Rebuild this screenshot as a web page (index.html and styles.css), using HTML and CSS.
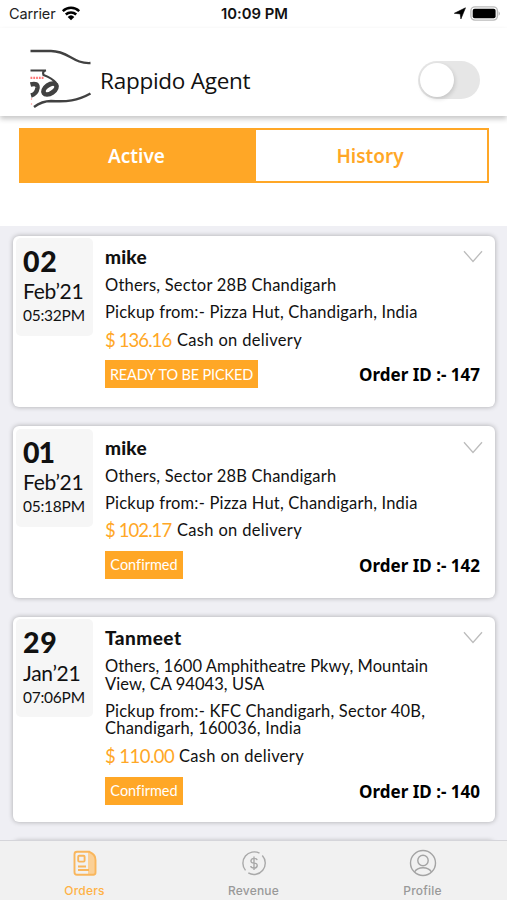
FILE: index.html
```html
<!DOCTYPE html>
<html lang="en">
<head>
<meta charset="utf-8">
<title>Rappido Agent</title>
<link rel="stylesheet" href="styles.css">
</head>
<body>
<div class="app">
  <div class="status">
    <div class="carrier"><span class="carrier-name">Carrier</span>
      <svg width="20" height="15" viewBox="0 0 20 15" fill="none" stroke="#000" stroke-width="2.5"><path d="M1.8 5.1a12 12 0 0 1 16.400 0M4.800 8.500a7.500 7.500 0 0 1 10.400 0"/><path d="M10 14.200L6.700 10.900a4.800 4.800 0 0 1 6.600 0z" fill="#000" stroke="none"/></svg>
    </div>
    <div class="clock">10:09 PM</div>
    <div class="indicators">
      <svg width="12" height="13" viewBox="0 0 12 13"><path d="M11.500.8L6.900 12 6.200 6.900.3 6.300z" fill="#000" stroke="#000" stroke-width=".6"/></svg>
      <svg width="31" height="15" viewBox="0 0 31 15"><rect x=".9" y=".9" width="26.500" height="13.200" rx="4" fill="#fff" stroke="#bbb" stroke-width="1.400"/><rect x="2.700" y="2.700" width="22.900" height="9.600" rx="2" fill="#000"/><path d="M28.700 5.200q2.200 2.300 0 4.600z" fill="#aaa"/></svg>
    </div>
  </div>
  <header class="header">
    <svg class="logo" width="62" height="62" viewBox="0 0 62 62" fill="none" stroke="#414141">
      <path d="M.5 4H21C39 4 43 17 60.500 16" stroke-width="2.300"/>
      <path d="M.5 23.500H16Q12 24 13.500 28Q22 31 26 36" stroke-width="2.200"/>
      <path d="M.5 30.800H14" stroke="#ff7777" stroke-width="2.200" stroke-dasharray="1.800 1"/>
      <path d="M.5 37.500Q8 35.500 7.500 41Q6.500 47 1 48.500" stroke-width="4.500"/>
      <g transform="rotate(-35 20 42)"><ellipse cx="20" cy="42" rx="9.800" ry="6.700" fill="#414141" stroke="none"/><ellipse cx="20" cy="42" rx="5" ry="1.800" fill="#fff" stroke="none"/></g>
      <path d="M4 60Q12 54 21 54C37 55 47 54 60.500 46.500" stroke-width="2.400"/>
      <path d="M1.500 51v9" stroke="#ffb9b9" stroke-width="1.200" stroke-dasharray="2 3"/>
    </svg>
    <h1 class="title">Rappido Agent</h1>
    <div class="switch"><div class="knob"></div></div>
  </header>
  <div class="filters">
    <div class="segments">
      <div class="segment selected">Active</div>
      <div class="segment">History</div>
    </div>
  </div>
  <main class="orders">
    <article class="card">
      <div class="date"><div class="day">02</div><div class="month">Feb’21</div><div class="time">05:32PM</div></div>
      <div class="info">
        <div class="top"><h2 class="name">mike</h2><svg width="20" height="13" viewBox="0 0 20 13" fill="none" stroke="#bcbcbc" stroke-width="1.300"><path d="M1 1.200L10 11.500 19 1.200"/></svg></div>
        <p class="line">Others, Sector 28B Chandigarh</p>
        <p class="line">Pickup from:- Pizza Hut, Chandigarh, India</p>
        <div class="payment"><span class="price">$ 136.16</span><span class="method">Cash on delivery</span></div>
        <div class="bottom"><span class="badge ready">READY TO BE PICKED</span><strong class="order">Order ID :- 147</strong></div>
      </div>
    </article>
    <article class="card">
      <div class="date"><div class="day narrow">01</div><div class="month">Feb’21</div><div class="time">05:18PM</div></div>
      <div class="info">
        <div class="top"><h2 class="name">mike</h2><svg width="20" height="13" viewBox="0 0 20 13" fill="none" stroke="#bcbcbc" stroke-width="1.300"><path d="M1 1.200L10 11.500 19 1.200"/></svg></div>
        <p class="line">Others, Sector 28B Chandigarh</p>
        <p class="line">Pickup from:- Pizza Hut, Chandigarh, India</p>
        <div class="payment"><span class="price">$ 102.17</span><span class="method">Cash on delivery</span></div>
        <div class="bottom"><span class="badge">Confirmed</span><strong class="order">Order ID :- 142</strong></div>
      </div>
    </article>
    <article class="card long">
      <div class="date"><div class="day">29</div><div class="month">Jan’21</div><div class="time">07:06PM</div></div>
      <div class="info">
        <div class="top"><h2 class="name">Tanmeet</h2><svg width="20" height="13" viewBox="0 0 20 13" fill="none" stroke="#bcbcbc" stroke-width="1.300"><path d="M1 1.200L10 11.500 19 1.200"/></svg></div>
        <p class="line address">Others, 1600 Amphitheatre Pkwy, Mountain<br>View, CA 94043, USA</p>
        <p class="line">Pickup from:- KFC Chandigarh, Sector 40B,<br>Chandigarh, 160036, India</p>
        <div class="payment"><span class="price wide">$ 110.00</span><span class="method">Cash on delivery</span></div>
        <div class="bottom"><span class="badge">Confirmed</span><strong class="order">Order ID :- 140</strong></div>
      </div>
    </article>
    <article class="card"></article>
  </main>
  <nav class="tabbar">
    <div class="tab current">
      <svg width="28" height="28" viewBox="0 0 28 28" fill="none" stroke="#f9b65c" stroke-width="1.900"><path d="M17 3h3q5 2 5 7v14q0 2-2 2h-6z" fill="#fbd096" stroke="none"/><path d="M6 2.800h12.500q6 2.700 6 8.200v12.500q0 2.200-2.200 2.200H6q-2.500 0-2.500-2.500V5.300q0-2.500 2.500-2.500z"/><rect x="7.200" y="6.800" width="6.400" height="5.800" rx="1"/><path d="M7 17.500h8M7 21h11"/></svg>
      <span>Orders</span>
    </div>
    <div class="tab">
      <svg width="28" height="28" viewBox="0 0 28 28" fill="none" stroke="#a9a9a9" stroke-width="1.400"><path d="M5.500 21.400A11.300 11.300 0 0 1 19.500 4.200M22.300 6.500A11.300 11.300 0 0 1 8.300 23.900"/><path d="M17.100 11.200Q16.700 9.400 14 9.400T11 11.700 14 14.100 17.200 16.600 14 19 10.800 17M14 7.500v13.400"/></svg>
      <span>Revenue</span>
    </div>
    <div class="tab">
      <svg width="28" height="28" viewBox="0 0 28 28" fill="none" stroke="#a4a4a4" stroke-width="1.400"><circle cx="14" cy="14" r="12.500"/><circle cx="14" cy="11.500" r="5.200"/><path d="M5.500 23Q8 18.800 14 18.800T22.500 23"/></svg>
      <span>Profile</span>
    </div>
  </nav>
</div>
</body>
</html>
```
FILE: styles.css
```css
* { box-sizing: border-box; }
body, h1, h2, p { margin: 0; }
body { background: #fff; color: #111; font-family: Lato, sans-serif; font-variant-ligatures: none; }
.app { display: flex; flex-direction: column; width: 507px; height: 900px; overflow: hidden; }

.status { display: grid; grid-template-columns: 1fr auto 1fr; align-items: center; flex: none; height: 28px; padding: 0 7px 1px 9px; font-family: Inter, sans-serif; }
.carrier { display: flex; align-items: center; gap: 6px; font-size: 14.500px; letter-spacing: -.15px; color: #222; }
.clock { font-size: 14.800px; font-weight: 600; }
.indicators { display: flex; align-items: center; justify-content: flex-end; gap: 4px; margin-right: -1px; }

.header { display: flex; align-items: center; flex: none; height: 88px; padding: 15px 27px 0 30px; background: #fff; box-shadow: 0 3px 5px rgba(0, 0, 0, .22); z-index: 1; }
.logo { margin-top: -3px; }
.title { margin: 2px 0 0 8px; font: 400 22.500px/30px "Open Sans", sans-serif; letter-spacing: -.25px; }
.switch { width: 62px; height: 38px; margin-left: auto; padding: 2px; border-radius: 19px; background: #e6e6e6; }
.knob { width: 34px; height: 34px; border-radius: 50%; background: #fff; box-shadow: 1px 2px 4px rgba(0, 0, 0, .15); }

.filters { flex: none; height: 110px; padding: 12px 18px 0 19px; }
.segments { display: grid; grid-template-columns: 235px 1fr; height: 55px; border: 2px solid #ffa726; }
.segment { display: flex; align-items: center; justify-content: center; padding-right: 3px; color: #ffa726; font: 600 19px "Noto Sans", sans-serif; }
.selected { padding-right: 4px; background: #ffa726; color: #fff; }

.orders { display: flex; flex-direction: column; flex: 1; min-height: 0; gap: 19px; padding: 9.500px 12px 0 13px; background: #efeff4; overflow: hidden; }
.card { display: flex; flex: none; gap: 12px; height: 171.700px; padding: 2.500px 15px 0 3px; border-radius: 6px; background: #fff; box-shadow: 0 0 5px rgba(0, 0, 0, .3); }
.long { height: 205.500px; }
.date { flex: none; width: 77px; height: 98px; padding: 8px 0 0 7px; border-radius: 5px; background: #f6f6f6; }
.day { font-size: 28.500px; font-weight: 900; line-height: 30px; letter-spacing: .8px; }
.narrow { letter-spacing: -1px; }
.month { font-size: 21px; line-height: 30px; letter-spacing: -.3px; }
.time { font-size: 15.500px; line-height: 19px; letter-spacing: -.25px; }
.long .month, .long .time { padding-top: .5px; }
.info { flex: 1; padding-top: 9px; }
.top { display: flex; justify-content: space-between; height: 20px; margin-bottom: 10px; }
.top svg { flex: none; margin: 3px -3px 0 0; }
.name { font-size: 19px; line-height: 20px; font-weight: 900; letter-spacing: .2px; }
.long .name { letter-spacing: .45px; }
.line { margin-bottom: 9.500px; font-size: 16.500px; line-height: 17.600px; letter-spacing: .2px; white-space: nowrap; }
.long .line { line-height: 17.500px; margin-bottom: 9.200px; }
.long .address { letter-spacing: .06px; }
.payment { display: flex; align-items: center; height: 19px; margin: -1px 0 11px; }
.long .payment { margin: 0 0 11px; }
.price { width: 72px; color: #ffa726; font-size: 18.500px; letter-spacing: -.9px; white-space: nowrap; }
.wide { width: 74px; letter-spacing: -.55px; }
.method { font-size: 16.500px; letter-spacing: .32px; }
.bottom { display: flex; align-items: center; justify-content: space-between; height: 28px; }
.badge { display: flex; align-items: center; justify-content: center; width: 78px; height: 28px; background: #ffa726; color: #fff; font-size: 14.500px; white-space: nowrap; }
.ready { width: 153px; letter-spacing: -.15px; }
.order { padding-top: 1px; font: 700 17px "Noto Sans", sans-serif; color: #000; }

.tabbar { display: grid; grid-template-columns: repeat(3, 1fr); flex: none; height: 60px; border-top: 1px solid #d5d5da; background: #f1f1f1; }
.tab { display: flex; flex-direction: column; align-items: center; padding-top: 8px; gap: 6px; color: #999; font: 500 12px/16px Inter, sans-serif; letter-spacing: .2px; }
.current { color: #ffb246; }
```
